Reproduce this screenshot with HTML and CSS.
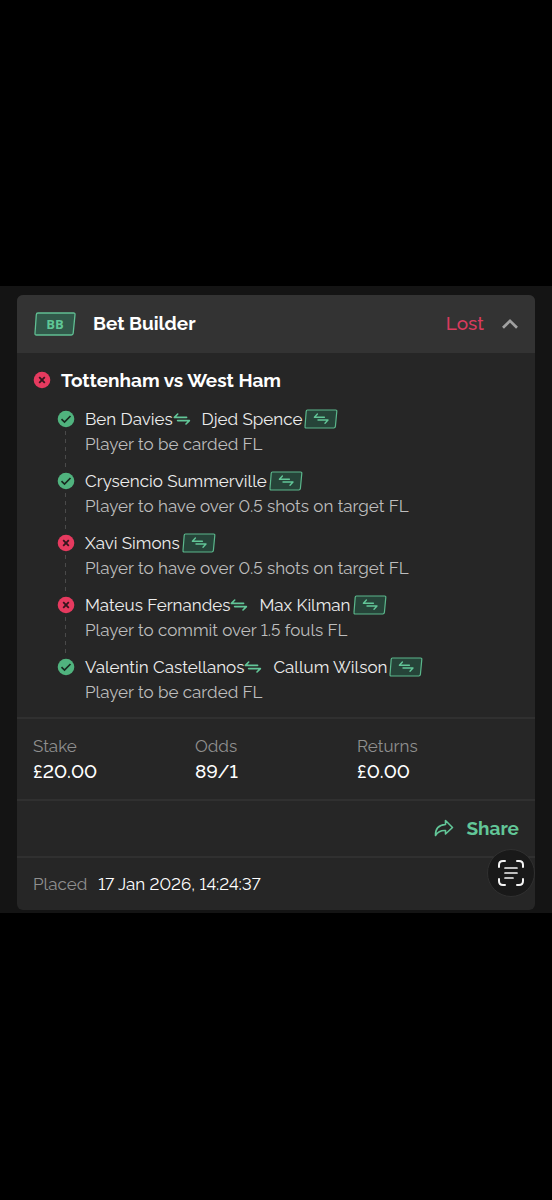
FILE: index.html
```html
<!DOCTYPE html>
<html lang="en">
<head>
<meta charset="utf-8">
<meta name="viewport" content="width=device-width, initial-scale=1">
<title>Bet Builder</title>
<link rel="stylesheet" href="styles.css">
</head>
<body>
<svg class="defs" aria-hidden="true">
  <symbol id="tick" viewBox="0 0 18 18"><circle cx="9" cy="9" r="8.3" fill="#50b37e"/><path d="M4.5 9.2l3 2.8 6-6" fill="none" stroke="#17291f" stroke-width="1.7"/></symbol>
  <symbol id="cross" viewBox="0 0 18 18"><circle cx="9" cy="9" r="8.3" fill="#e63a5f"/><path d="M6.2 6.2l5.6 5.6M11.8 6.2l-5.6 5.6" fill="none" stroke="#35151d" stroke-width="1.8"/></symbol>
  <symbol id="swap" viewBox="0 0 18 12"><path d="M4.700 1L1.400 4.400H13.600M4.600 7.600H16.400L13 11" fill="none" stroke="#62c698" stroke-width="1.600" stroke-linejoin="round" stroke-linecap="round"/></symbol>
  <symbol id="sub" viewBox="0 0 34 20"><path d="M3.400 1H31.600Q33 1 32.800 2.400L31.400 17.400Q31.200 19 29.800 19H2.200Q.8 19 1 17.400L2.200 2.400Q2.300 1 3.400 1Z" fill="#264439" stroke="#5ab68b" stroke-width="1.200"/><path d="M13.400 5L10.400 8.200H20.400M14 11H24L21 14.200" fill="none" stroke="#62c698" stroke-width="1.400" stroke-linejoin="round" stroke-linecap="round"/></symbol>
</svg>
<main class="page">
  <section class="panel">
    <article class="card">
      <header class="card-head">
        <span class="bb"><svg class="bb-shape" viewBox="0 0 42 24" aria-hidden="true"><path d="M4 1H39.500Q41.200 1 41 2.700L39.200 21.300Q39 23 37.300 23H2.500Q.8 23 1 21.300L2.300 2.700Q2.400 1 4 1Z" fill="#31594a" stroke="#60bf93" stroke-width="1.300"/></svg><span class="bb-text">BB</span></span>
        <h1 class="card-title">Bet Builder</h1>
        <span class="status">Lost</span>
        <button class="toggle" type="button" aria-label="Collapse bet" aria-expanded="true"><svg class="chevron" viewBox="0 0 18 12" aria-hidden="true"><path d="M2 9.800L9 2.800l7 7" fill="none" stroke="#a0a0a0" stroke-width="2.700"/></svg></button>
      </header>
      <div class="event">
        <h2 class="event-title"><svg class="mark" role="img" aria-label="Lost"><use href="#cross"/></svg>Tottenham vs West Ham</h2>
        <ul class="legs">
          <li class="leg"><svg class="mark" role="img" aria-label="Won"><use href="#tick"/></svg><div class="leg-name">Ben Davies<svg class="swap" aria-hidden="true"><use href="#swap"/></svg>Djed Spence<svg class="sub" aria-hidden="true"><use href="#sub"/></svg></div><p class="leg-market">Player to be carded FL</p></li>
          <li class="leg"><svg class="mark" role="img" aria-label="Won"><use href="#tick"/></svg><div class="leg-name">Crysencio Summerville<svg class="sub" aria-hidden="true"><use href="#sub"/></svg></div><p class="leg-market">Player to have over 0.5 shots on target FL</p></li>
          <li class="leg"><svg class="mark" role="img" aria-label="Lost"><use href="#cross"/></svg><div class="leg-name">Xavi Simons<svg class="sub" aria-hidden="true"><use href="#sub"/></svg></div><p class="leg-market">Player to have over 0.5 shots on target FL</p></li>
          <li class="leg"><svg class="mark" role="img" aria-label="Lost"><use href="#cross"/></svg><div class="leg-name">Mateus Fernandes<svg class="swap" aria-hidden="true"><use href="#swap"/></svg>Max Kilman<svg class="sub" aria-hidden="true"><use href="#sub"/></svg></div><p class="leg-market">Player to commit over 1.5 fouls FL</p></li>
          <li class="leg"><svg class="mark" role="img" aria-label="Won"><use href="#tick"/></svg><div class="leg-name">Valentin Castellanos<svg class="swap" aria-hidden="true"><use href="#swap"/></svg>Callum Wilson<svg class="sub" aria-hidden="true"><use href="#sub"/></svg></div><p class="leg-market">Player to be carded FL</p></li>
        </ul>
      </div>
      <dl class="stats">
        <div><dt>Stake</dt><dd>£20.00</dd></div>
        <div><dt>Odds</dt><dd>89/1</dd></div>
        <div><dt>Returns</dt><dd>£0.00</dd></div>
      </dl>
      <div class="actions">
        <button class="share" type="button"><svg class="share-icon" viewBox="0 0 20 18" aria-hidden="true"><path d="M11.500 1.500L18.500 8.500L11.500 15V11.500C6.500 11.200 4 12.500 1.500 16.500C1.200 10 4.500 6 11.500 5.500Z" fill="none" stroke="#62c698" stroke-width="1.600" stroke-linejoin="round"/></svg>Share</button>
      </div>
      <footer class="placed"><span class="placed-label">Placed</span><time datetime="2026-01-17T14:24:37">17 Jan 2026, 14:24:37</time></footer>
    </article>
    <button class="scan" type="button" aria-label="Scan text"><svg class="scan-icon" viewBox="0 0 28 28" aria-hidden="true"><g fill="none" stroke="#f5f5f5" stroke-width="2" stroke-linecap="round"><path d="M2 8V6Q2 2 6 2H8M20 2h2q4 0 4 4v2M26 20v2q0 4-4 4H20M8 26H6Q2 26 2 22V20"/><path d="M8 9H20M8 14H20M8 19H16" stroke-width="1.700"/></g></svg></button>
  </section>
</main>
</body>
</html>
```
FILE: styles.css
```css
* { box-sizing: border-box; }
body {
  margin: 0;
  background: #000;
  color: #fff;
  font: 17px/25px Raleway, Lato, sans-serif;
  font-variant-numeric: lining-nums;
}
h1, h2, p, ul, dl, dd { margin: 0; padding: 0; }
button { border: 0; padding: 0; background: none; color: inherit; font: inherit; cursor: pointer; }
svg { display: block; flex: none; }
.defs { position: absolute; width: 0; height: 0; }
.page {
  min-height: 100vh;
  padding-bottom: 2px;
  display: flex;
  flex-direction: column;
  justify-content: center;
}
.panel { position: relative; padding: 9px 17px 3px; background: #141414; }
.card { border-radius: 6px; background: #262626; overflow: hidden; }
.card-head {
  display: flex;
  align-items: center;
  height: 58px;
  padding: 0 16px 0 17px;
  background: #333;
}
.bb { display: grid; place-items: center; width: 42px; height: 24px; }
.bb-shape, .bb-text { grid-area: 1 / 1; }
.bb-shape { width: 42px; height: 24px; }
.bb-text { font: 700 13px/24px "Open Sans", sans-serif; color: #5fc796; }
.card-title { margin-left: 17px; font-size: 19px; font-weight: 700; }
.status { margin-left: auto; font-size: 19px; font-weight: 500; color: #d93b5e; }
.toggle { margin-left: 17px; }
.chevron { width: 18px; height: 12px; }
.event { padding: 15px 16px 12px; }
.event-title { display: flex; align-items: center; gap: 10px; font-size: 19px; font-weight: 700; }
.mark { width: 18px; height: 18px; }
.legs { display: grid; gap: 12px; margin: 14px 0 0 24px; list-style: none; }
.leg { position: relative; display: grid; grid-template-columns: 18px 1fr; column-gap: 10px; align-items: center; }
.leg:not(:last-child)::after {
  content: "";
  position: absolute;
  left: 8px;
  top: 24px;
  bottom: -14px;
  width: 1px;
  background: repeating-linear-gradient(#4a4a4a 0 4px, transparent 4px 8px);
}
.leg-name { display: flex; align-items: center; color: #ededed; }
.leg-market { grid-column: 2; color: #bdbdbd; }
.swap { width: 18px; height: 12px; margin: 0 11px 0 0; }
.sub { width: 34px; height: 20px; margin-left: 2px; }
.stats {
  display: grid;
  grid-template-columns: repeat(3, 1fr);
  padding: 15px 16px;
  border-top: 2px solid #303030;
}
.stats dt { color: #8f8f8f; }
.stats dd { font-size: 19px; font-weight: 500; }
.actions { display: flex; justify-content: flex-end; padding: 15px 16px; border: solid #303030; border-width: 2px 0; }
.share { display: flex; align-items: center; gap: 12px; font-size: 19px; font-weight: 700; color: #62c698; }
.share-icon { width: 20px; height: 18px; }
.placed { display: flex; gap: 11px; padding: 14px 16px 13px; }
.placed-label { color: #8f8f8f; }
.scan {
  position: absolute;
  right: 17px;
  bottom: 16px;
  display: grid;
  place-items: center;
  width: 48px;
  height: 48px;
  border: 1px solid #303030;
  border-radius: 50%;
  background: #191919;
}
.scan-icon { width: 28px; height: 28px; }
```
